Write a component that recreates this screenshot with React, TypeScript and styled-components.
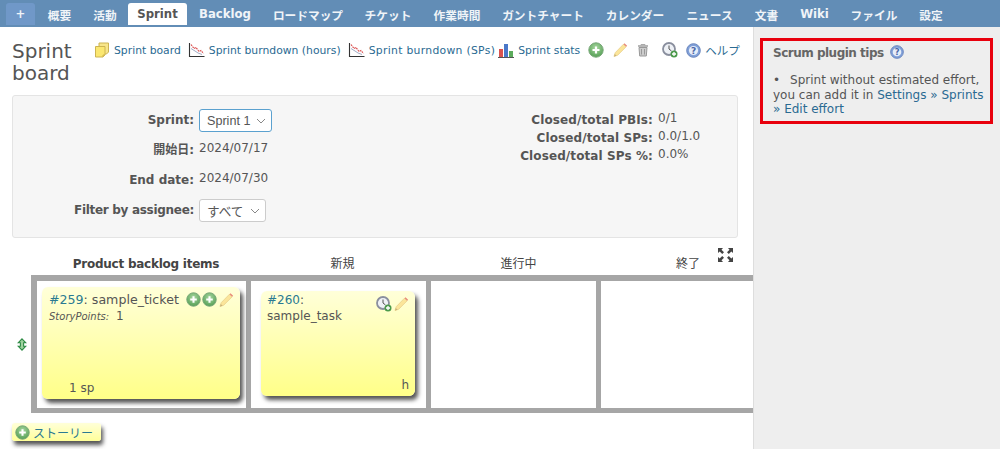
import React from "react";
import styled, { createGlobalStyle } from "styled-components";

const FONT = `"DejaVu Sans", "Noto Sans CJK JP", sans-serif`;

const Global = createGlobalStyle`
  html, body { margin: 0; padding: 0; background: #fff; }
  body { font-family: ${FONT}; font-size: 12px; color: #333; }
  * { box-sizing: border-box; }
`;

const Page = styled.div`
  width: 1000px;
  height: 449px;
  overflow: hidden;
  display: flex;
  flex-direction: column;
`;

const TopMenu = styled.nav`
  height: 27px;
  flex: none;
  background: #628db6;
  display: flex;
  align-items: flex-start;
  padding: 3px 0 2px 6px;
`;

const Tab = styled.a<{ $active?: boolean; $width: number; $plus?: boolean }>`
  width: ${(p) => p.$width}px;
  height: 22px;
  flex: none;
  display: flex;
  align-items: center;
  justify-content: center;
  border-radius: 3px 3px 0 0;
  font-size: 11.7px;
  font-weight: 700;
  white-space: nowrap;
  color: ${(p) => (p.$active ? "#555" : "#f0f4f8")};
  background: ${(p) => (p.$active ? "#fff" : p.$plus ? "#7098c8" : "transparent")};
`;

const Body = styled.div`
  flex: 1;
  display: flex;
  min-height: 0;
`;

const Main = styled.main`
  width: 754px;
  flex: none;
  padding: 13px 0 0 12px;
  overflow: hidden;
  border-right: 1px solid #ddd;
`;

const Head = styled.div`
  display: flex;
  align-items: flex-start;
  height: 55px;
`;

const Title = styled.h2`
  width: 82px;
  flex: none;
  margin: 0;
  font-size: 20px;
  font-weight: 400;
  line-height: 22px;
  color: #555;
`;

const Actions = styled.div`
  display: flex;
  align-items: center;
  height: 18px;
  margin-top: 1px;
  white-space: nowrap;
  font-size: 10.8px;
`;

const Action = styled.a<{ $gap: number; $track?: number; $size?: number }>`
  display: inline-flex;
  align-items: center;
  gap: 4px;
  margin-right: ${(p) => p.$gap}px;
  letter-spacing: ${(p) => p.$track ?? 0}px;
  font-size: ${(p) => p.$size ?? 10.8}px;
  color: #2a6a92;
`;

const Panel = styled.section`
  width: 726px;
  height: 143px;
  background: #f6f6f6;
  border: 1px solid #e4e4e4;
  border-radius: 3px;
  display: flex;
`;

const FormCol = styled.div`
  width: 464px;
  padding-top: 17px;
`;

const FormRow = styled.div<{ $h: number }>`
  height: ${(p) => p.$h}px;
  display: flex;
  align-items: flex-start;
`;

const Label = styled.div<{ $w: number; $track?: number }>`
  width: ${(p) => p.$w}px;
  flex: none;
  text-align: right;
  font-weight: 700;
  font-size: 12px;
  letter-spacing: ${(p) => p.$track ?? 0}px;
  color: #555;
  padding-right: 5px;
  line-height: 15px;
  white-space: nowrap;
`;

const Value = styled.div`
  font-size: 12px;
  color: #555;
  line-height: 15px;
  margin-top: -2px;
  white-space: nowrap;
`;

const Select = styled.div<{ $focus?: boolean; $w: number }>`
  width: ${(p) => p.$w}px;
  height: 23px;
  margin-top: -4px;
  display: flex;
  align-items: center;
  justify-content: space-between;
  padding: 0 5px 0 7px;
  background: #fff;
  border: 1px solid ${(p) => (p.$focus ? "#5ba1cf" : "#ccc")};
  border-radius: 3px;
  font-family: "Liberation Sans", "Noto Sans CJK JP", sans-serif;
  font-size: 12.6px;
  color: #555;
`;

const StatCol = styled.div`
  padding-top: 17px;
`;

const StatRow = styled.div`
  height: 18px;
  display: flex;
`;

const BoardHead = styled.div`
  position: relative;
  height: 37px;
  display: grid;
  grid-template-columns: 209px 175px 165px 172px;
  column-gap: 5px;
  margin-left: 25px;
  padding-top: 19px;
  font-size: 12px;
  width: 760px;
  color: #444;
`;

const ColHead = styled.div<{ $bold?: boolean; $shift: number }>`
  text-align: center;
  font-weight: ${(p) => (p.$bold ? 700 : 400)};
  letter-spacing: ${(p) => (p.$bold ? -0.25 : 0)}px;
  padding-left: ${(p) => p.$shift}px;
  line-height: 15px;
`;

const Expand = styled.svg`
  position: absolute;
  left: 680px;
  top: 9px;
`;

const Row = styled.div`
  display: flex;
  align-items: center;
`;

const Handle = styled.div`
  width: 19px;
  flex: none;
  display: flex;
  justify-content: center;
`;

const Board = styled.div`
  background: #a6a6a6;
  padding: 6px 0 5px 6px;
  display: grid;
  grid-template-columns: 209px 175px 165px 172px;
  column-gap: 5px;
  height: 138px;
  width: 760px;
  flex: none;
`;

const Cell = styled.div<{ $pad?: string }>`
  background: #fff;
  padding: ${(p) => p.$pad ?? 0};
`;

const Note = styled.div<{ $h: number; $top: number; $left: number; $size: number }>`
  position: relative;
  height: ${(p) => p.$h}px;
  padding: ${(p) => p.$top}px 6px 0 ${(p) => p.$left}px;
  border-radius: 6px;
  background: linear-gradient(#ffffd9, #ffff88);
  box-shadow: 3px 4px 4px #555;
  font-size: ${(p) => p.$size}px;
  line-height: 16px;
  color: #555;
`;

const NoteIcons = styled.div`
  position: absolute;
  top: 5px;
  right: 6px;
  display: flex;
  gap: 1px;
`;

const Issue = styled.span`
  color: #2a7a92;
`;

const Points = styled.div`
  line-height: 16px;
  font-size: 12px;
`;

const PointsKey = styled.em`
  font-size: 10px;
  margin-right: 3px;
`;

const NoteFoot = styled.div<{ $left?: number; $right?: number }>`
  position: absolute;
  bottom: 3px;
  font-size: 12px;
  left: ${(p) => (p.$left !== undefined ? `${p.$left}px` : "auto")};
  right: ${(p) => (p.$right !== undefined ? `${p.$right}px` : "auto")};
`;

const AddStory = styled.a`
  display: inline-flex;
  align-items: center;
  gap: 3px;
  margin-top: 10px;
  width: 89px;
  height: 18px;
  padding-left: 3px;
  border-radius: 3px;
  background: linear-gradient(#ffffd9, #ffff99);
  box-shadow: 2px 4px 4px #555;
  font-family: "Noto Sans CJK JP", sans-serif;
  font-size: 12px;
  color: #2a7a92;
`;

const Side = styled.aside`
  flex: 1;
  background: #eee;
  padding: 11px 7px 0 6px;
`;

const Tips = styled.div`
  height: 86px;
  width: 233px;
  border: 3px solid #e8000d;
  padding: 5px 0 0 10px;
  font-size: 12px;
  color: #555;
`;

const TipsTitle = styled.h3`
  margin: 0 0 12px;
  font-size: 12px;
  font-weight: 700;
  letter-spacing: -0.5px;
  line-height: 15px;
  display: flex;
  align-items: flex-start;
  gap: 6px;
  color: #666;
`;

const TipHelp = styled.span`
  display: flex;
  margin-top: -1px;
`;

const TipsText = styled.div`
  line-height: 14.7px;
  font-size: 12px;
  white-space: nowrap;
`;

const Bullet = styled.span`
  margin-right: 10px;
`;

const TipLink = styled.a`
  color: #2a6a92;
`;

const Plus = ({ size = 16 }: { size?: number }) => (
  <svg width={size} height={size} viewBox="0 0 16 16">
    <defs>
      <radialGradient id="g" cx="50%" cy="35%" r="65%">
        <stop offset="0" stopColor="#a9d8a0" />
        <stop offset="1" stopColor="#559f55" />
      </radialGradient>
    </defs>
    <circle cx="8" cy="8" r="7.2" fill="url(#g)" stroke="#7aa87a" />
    <path d="M8 4.500v7M4.500 8h7" stroke="#fff" strokeWidth="2.2" />
  </svg>
);

const Pencil = () => (
  <svg width="16" height="16" viewBox="0 0 16 16">
    <path d="M2 14.500l1.200-3.800L11.500 2.200l2.600 2.600-8.400 8.400z" fill="#fbe59a" stroke="#e8cf8a" strokeWidth=".8" />
    <path d="M11.500 2.200l1-1 2.600 2.600-1 1z" fill="#e88a7a" />
    <path d="M2 14.500l.8-2.600 1.800 1.800z" fill="#c9b27a" />
  </svg>
);

const Trash = () => (
  <svg width="14" height="14" viewBox="0 0 14 14">
    <path d="M2 3h10" stroke="#999" strokeWidth="1.400" />
    <path d="M5 2.500V1.500h4v1" fill="none" stroke="#aaa" />
    <path d="M3 4.500h8l-.7 8.500H3.700z" fill="#ccc" stroke="#999" />
    <path d="M5.500 6v5.500M8.500 6v5.500" stroke="#999" />
  </svg>
);

const Clock = () => (
  <svg width="16" height="16" viewBox="0 0 16 16">
    <circle cx="7" cy="7" r="6" fill="#eef1f6" stroke="#8a8f9e" strokeWidth="1.800" />
    <path d="M7 3.500V7l2.500 2" fill="none" stroke="#555" />
    <circle cx="12" cy="12" r="3.500" fill="#4c9a4c" />
    <path d="M12 10v4M10 12h4" stroke="#fff" strokeWidth="1.300" />
  </svg>
);

const Help = ({ size = 15 }: { size?: number }) => (
  <svg width={size} height={size} viewBox="0 0 15 15">
    <circle cx="7.500" cy="7.500" r="6.800" fill="#7f9fd8" stroke="#6a86bd" />
    <circle cx="7.500" cy="7.500" r="4.600" fill="#e6edf8" />
    <text x="7.500" y="10.600" textAnchor="middle" fontSize="9" fontWeight="700" fill="#4a68a8" fontFamily="DejaVu Sans">?</text>
  </svg>
);

const Sticky = () => (
  <svg width="16" height="16" viewBox="0 0 16 16">
    <path d="M5 1h9.500v9l-2 2H5z" fill="#f7e58a" stroke="#cdb452" />
    <path d="M1.500 4.500H11v8.500l-2 2H1.500z" fill="#fbe770" stroke="#cdb452" />
    <path d="M9 15v-2h2" fill="#e6cc5a" stroke="#cdb452" />
  </svg>
);

const Burn = () => (
  <svg width="17" height="16" viewBox="0 0 17 16">
    <path d="M1.500 1v13.500H16.500" fill="none" stroke="#333" strokeWidth="1.100" />
    <path d="M3 6.500l4 2.500 3 2 4 1.500" fill="none" stroke="#8a96b5" strokeWidth=".8" />
    <path d="M3 2.500l3 4 2-1 3 4 2-1 2.500 3" fill="none" stroke="#d94a4a" strokeWidth="1.100" strokeDasharray="1.800 .8" />
  </svg>
);

const Bars = () => (
  <svg width="16" height="16" viewBox="0 0 16 16">
    <rect x="1" y="7" width="4" height="8" fill="#d9534f" />
    <rect x="6" y="2" width="4" height="13" fill="#4a78c8" />
    <rect x="11" y="9" width="4" height="6" fill="#5cab5c" />
    <path d="M0 15.500h16" stroke="#555" />
  </svg>
);

const Chevron = () => (
  <svg width="10" height="6" viewBox="0 0 10 6">
    <path d="M1 1l4 4 4-4" fill="none" stroke="#888" strokeWidth="1" />
  </svg>
);

const Move = () => (
  <svg width="10" height="13" viewBox="0 0 10 13">
    <path d="M5 .8L8.800 4.800H6.600v3.400h2.200L5 12.200 1.200 8.200h2.200V4.800H1.200z" fill="#9ed29e" stroke="#2e8b45" strokeWidth="1.100" />
  </svg>
);

const tabs: [string, number, boolean?][] = [
  ["概要", 45],
  ["活動", 46],
  ["Sprint", 59, true],
  ["Backlog", 76],
  ["ロードマップ", 90],
  ["チケット", 70],
  ["作業時間", 68],
  ["ガントチャート", 104],
  ["カレンダー", 80],
  ["ニュース", 69],
  ["文書", 45],
  ["Wiki", 51],
  ["ファイル", 68],
  ["設定", 46],
];

export default function App() {
  return (
    <Page>
      <Global />
      <TopMenu>
        <Tab $width={29} $plus>+</Tab>
        <Tab $width={2} />
        {tabs.map(([t, w, a]) => (
          <Tab key={t} $width={w} $active={a}>{t}</Tab>
        ))}
      </TopMenu>
      <Body>
        <Main>
          <Head>
            <Title>Sprint board</Title>
            <Actions>
              <Action $gap={7}><Sticky />Sprint board</Action>
              <Action $gap={7}><Burn />Sprint burndown (hours)</Action>
              <Action $gap={3} $track={0.3}><Burn />Sprint burndown (SPs)</Action>
              <Action $gap={8}><Bars />Sprint stats</Action>
              <Action $gap={8}><Plus /></Action>
              <Action $gap={8}><Pencil /></Action>
              <Action $gap={12}><Trash /></Action>
              <Action $gap={8}><Clock /></Action>
              <Action $gap={0} $size={11.5}><Help />ヘルプ</Action>
            </Actions>
          </Head>
          <Panel>
            <FormCol>
              <FormRow $h={30}>
                <Label $w={186}>Sprint:</Label>
                <Select $focus $w={73}>Sprint 1 <Chevron /></Select>
              </FormRow>
              <FormRow $h={30}>
                <Label $w={186}>開始日:</Label>
                <Value>2024/07/17</Value>
              </FormRow>
              <FormRow $h={30}>
                <Label $w={186}>End date:</Label>
                <Value>2024/07/30</Value>
              </FormRow>
              <FormRow $h={30}>
                <Label $w={186} $track={-0.3}>Filter by assignee:</Label>
                <Select $w={67}>すべて <Chevron /></Select>
              </FormRow>
            </FormCol>
            <StatCol>
              <StatRow><Label $w={181} $track={0.1}>Closed/total PBIs:</Label><Value>0/1</Value></StatRow>
              <StatRow><Label $w={181} $track={0.1}>Closed/total SPs:</Label><Value>0.0/1.0</Value></StatRow>
              <StatRow><Label $w={181} $track={0.1}>Closed/total SPs %:</Label><Value>0.0%</Value></StatRow>
            </StatCol>
          </Panel>
          <BoardHead>
            <ColHead $bold $shift={9}>Product backlog items</ColHead>
            <ColHead $shift={8}>新規</ColHead>
            <ColHead $shift={10}>進行中</ColHead>
            <ColHead $shift={2}>終了</ColHead>
            <Expand width="17" height="16" viewBox="0 0 17 16">
              <path d="M1 1h5L4.500 2.700 7 5.200 5.200 7 2.700 4.500 1 6zM16 1h-5l1.500 1.700L10 5.200 11.800 7l2.500-2.500L16 6zM1 15h5l-1.500-1.700L7 10.800 5.200 9l-2.500 2.500L1 10zM16 15h-5l1.500-1.700L10 10.800 11.800 9l2.500 2.500L16 10z" fill="#444" />
            </Expand>
          </BoardHead>
          <Row>
            <Handle><Move /></Handle>
            <Board>
              <Cell $pad="6px 6px 0 5px">
                <Note $h={112} $top={5} $left={7} $size={12.6}>
                  <Issue>#259</Issue>: sample_ticket
                  <NoteIcons><Plus size={15} /><Plus size={15} /><Pencil /></NoteIcons>
                  <Points><PointsKey>StoryPoints:</PointsKey> 1</Points>
                  <NoteFoot $left={27}>1 sp</NoteFoot>
                </Note>
              </Cell>
              <Cell $pad="10px 11px 0 10px">
                <Note $h={105} $top={1} $left={6} $size={12}>
                  <Issue>#260</Issue>:<br />sample_task
                  <NoteIcons><Clock /><Pencil /></NoteIcons>
                  <NoteFoot $right={6}>h</NoteFoot>
                </Note>
              </Cell>
              <Cell />
              <Cell />
            </Board>
          </Row>
          <AddStory><Plus size={15} />ストーリー</AddStory>
        </Main>
        <Side>
          <Tips>
            <TipsTitle>Scrum plugin tips <TipHelp><Help size={14} /></TipHelp></TipsTitle>
            <TipsText>
              <Bullet>•</Bullet>Sprint without estimated effort,<br />
              you can add it in <TipLink>Settings » Sprints</TipLink><br />
              <TipLink>» Edit effort</TipLink>
            </TipsText>
          </Tips>
        </Side>
      </Body>
    </Page>
  );
}
